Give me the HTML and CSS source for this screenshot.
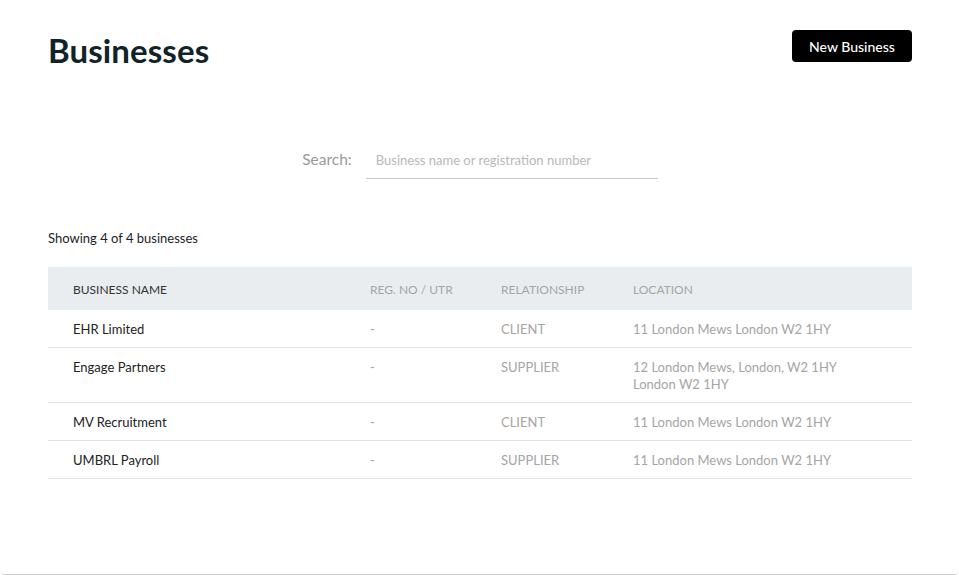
FILE: index.html
```html
<!DOCTYPE html>
<html lang="en">
<head>
<meta charset="utf-8">
<title>Businesses</title>
<link rel="stylesheet" href="styles.css">
</head>
<body>
<div class="page">
  <header class="page-header">
    <h1 class="title">Businesses</h1>
    <button class="btn-primary" type="button">New Business</button>
  </header>

  <div class="search">
    <label class="search-label" for="q">Search:</label>
    <input class="search-input" id="q" type="text" placeholder="Business name or registration number">
  </div>

  <p class="count">Showing 4 of 4 businesses</p>

  <div class="table">
    <div class="row head">
      <div class="cell name">BUSINESS NAME</div>
      <div class="cell">REG. NO / UTR</div>
      <div class="cell">RELATIONSHIP</div>
      <div class="cell">LOCATION</div>
    </div>
    <div class="row">
      <div class="cell name">EHR Limited</div>
      <div class="cell">-</div>
      <div class="cell">CLIENT</div>
      <div class="cell">11 London Mews London W2 1HY</div>
    </div>
    <div class="row">
      <div class="cell name">Engage Partners</div>
      <div class="cell">-</div>
      <div class="cell">SUPPLIER</div>
      <div class="cell">12 London Mews, London, W2 1HY<br>London W2 1HY</div>
    </div>
    <div class="row">
      <div class="cell name">MV Recruitment</div>
      <div class="cell">-</div>
      <div class="cell">CLIENT</div>
      <div class="cell">11 London Mews London W2 1HY</div>
    </div>
    <div class="row">
      <div class="cell name">UMBRL Payroll</div>
      <div class="cell">-</div>
      <div class="cell">SUPPLIER</div>
      <div class="cell">11 London Mews London W2 1HY</div>
    </div>
  </div>
</div>
</body>
</html>
```

FILE: styles.css
```css
* { box-sizing: border-box; }
html, body { margin: 0; padding: 0; background: #fff; }
body {
  font-family: Lato, "Open Sans", Arial, sans-serif;
  color: #222;
}
.page {
  height: 575px;
  padding: 30px 46px 0 47px;
  border-bottom: 1px solid #cfcfcf;
  border-radius: 0 0 3px 3px;
  margin: 0 1px;
  overflow: hidden;
}
.page-header {
  display: flex;
  justify-content: space-between;
  align-items: flex-start;
  height: 32px;
}
.title {
  margin: 0;
  font-size: 33px;
  font-weight: 700;
  color: #10232a;
  line-height: 40px;
  letter-spacing: 0.1px;
}
.btn-primary {
  background: #000;
  color: #fff;
  border: 0;
  border-radius: 4px;
  width: 120px;
  height: 32px;
  font-family: inherit;
  font-size: 14px;
  font-weight: 500;
  padding: 0;
  cursor: pointer;
}
.search {
  display: flex;
  align-items: center;
  justify-content: center;
  margin-top: 79px;
}
.search-label {
  font-size: 15.5px;
  color: #9a9a9a;
  margin-right: 14px;
  margin-top: -2px;
}
.search-input {
  width: 292px;
  height: 38px;
  border: 0;
  border-bottom: 1px solid #c8c8c8;
  padding: 0 10px;
  font-family: inherit;
  font-size: 13px;
  color: #333;
  outline: none;
}
.search-input::placeholder { color: #b8b8b8; }
.count {
  margin: 51px 0 0;
  font-size: 13px;
  line-height: 17px;
  color: #1d1d1d;
}
.table { margin-top: 20px; }
.row {
  display: grid;
  grid-template-columns: 322px 131px 132px 1fr;
  border-bottom: 1px solid #e0e3e5;
  font-size: 13px;
  line-height: 17px;
  padding: 11px 0 9px;
}
.row.head {
  background: #e9edf0;
  border-bottom: 0;
  padding: 14px 0 12px;
  font-size: 12px;
}
.cell { color: #a5a5a5; }
.cell.name { padding-left: 25px; color: #222; }
.row.head .cell.name { color: #333; }
```
